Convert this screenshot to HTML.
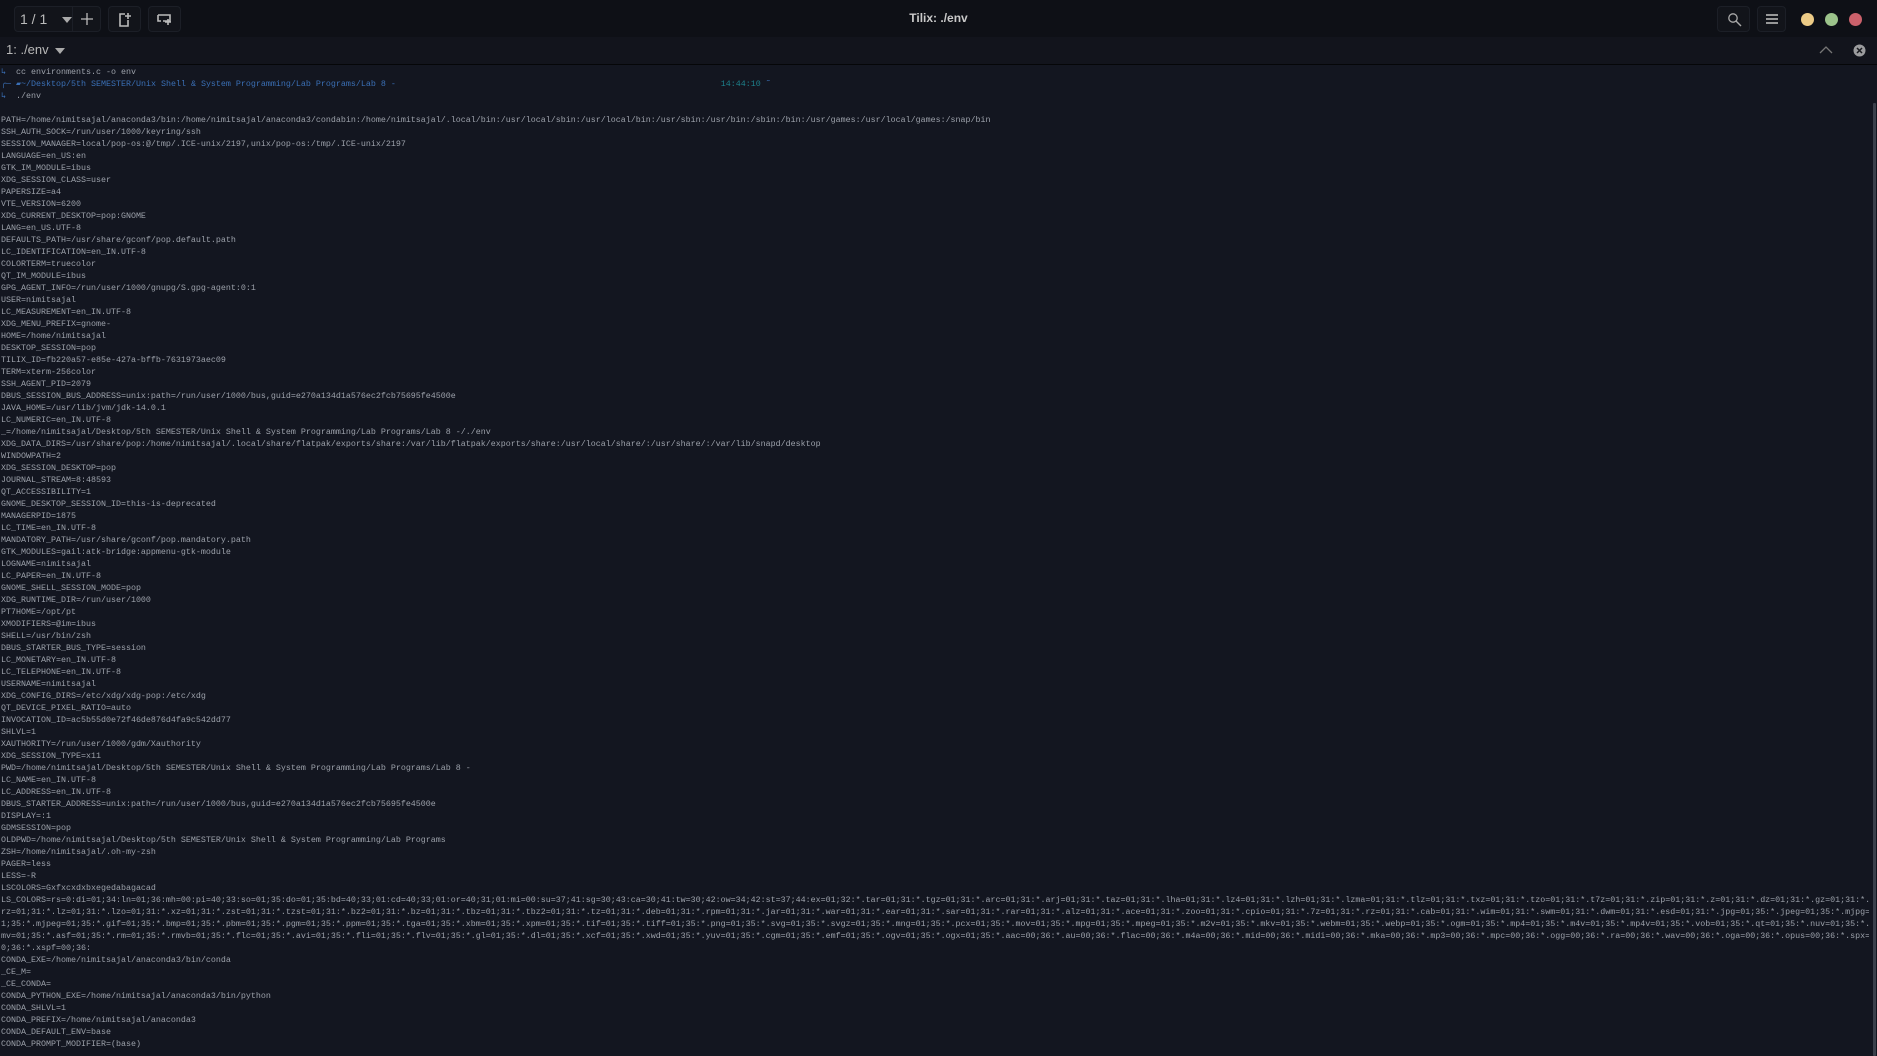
<!DOCTYPE html>
<html><head><meta charset="utf-8"><style>
html,body{margin:0;padding:0;width:1877px;height:1056px;overflow:hidden;background:#131620;}
#title{position:absolute;left:0;top:0;width:1877px;height:37px;background:#0e1016;}
#tabbar{position:absolute;left:0;top:37px;width:1877px;height:27px;background:#12141c;border-bottom:1px solid #050608;}
.btn{position:absolute;top:6px;height:26px;background:#12141a;border:1px solid #1c1f27;border-radius:4px;box-sizing:border-box;}
#ttl{position:absolute;left:0;width:1877px;top:11px;text-align:center;font:bold 12px "Liberation Sans",sans-serif;color:#c9c9c9;}
.dot{position:absolute;top:13px;width:13px;height:13px;border-radius:50%;}
#term{position:absolute;left:1px;top:66px;width:1868px;height:990px;font-family:"Liberation Mono",monospace;font-size:8.33px;line-height:12px;color:#9ca1aa;overflow:hidden;}
#term div{height:12px;overflow:hidden;white-space:pre;}
.b{color:#3a6fb5}.t{color:#1d808b}
#sb{position:absolute;left:1873px;top:103px;width:3px;height:953px;background:#3b404b;border-radius:1px;}
</style></head><body>
<div id="title">
 <div class="btn" style="left:14px;width:87px"><span style="position:absolute;left:5px;top:4px;font:14px 'Liberation Sans',sans-serif;color:#bbb">1 / 1</span><svg style="position:absolute;left:46px;top:9px" width="12" height="8"><path d="M1 1h10l-5 6z" fill="#aaa"/></svg><div style="position:absolute;left:57px;top:0;width:1px;height:24px;background:#1c1f27"></div><svg style="position:absolute;left:65px;top:5px" width="14" height="14"><path d="M7 1v12M1 7h12" stroke="#bbb" stroke-width="1.3"/></svg></div>
 <div class="btn" style="left:108px;width:33px"><svg style="position:absolute;left:9px;top:5px" width="14" height="16"><path d="M7 2H2v12h8V8" stroke="#bbb" stroke-width="1.6" fill="none"/><path d="M10 1v6M7 4h6" stroke="#bbb" stroke-width="1.6"/></svg></div>
 <div class="btn" style="left:148px;width:33px"><svg style="position:absolute;left:8px;top:6px" width="16" height="14"><path d="M1 2h12v6H6" stroke="#bbb" stroke-width="1.6" fill="none"/><path d="M1 2v6h3" stroke="#bbb" stroke-width="1.6" fill="none"/><path d="M11 6v6M8 9h6" stroke="#bbb" stroke-width="1.6"/></svg></div>
 <div id="ttl">Tilix: ./env</div>
 <div class="btn" style="left:1717px;width:33px"><svg style="position:absolute;left:9px;top:5px" width="16" height="16"><circle cx="6" cy="6" r="4.2" stroke="#aaa" stroke-width="1.3" fill="none"/><path d="M9 9l5 5" stroke="#aaa" stroke-width="1.4"/></svg></div>
 <div class="btn" style="left:1757px;width:29px"><svg style="position:absolute;left:8px;top:7px" width="12" height="11"><path d="M0 1h12M0 5h12M0 9h12" stroke="#aaa" stroke-width="1.7"/></svg></div>
 <div class="dot" style="left:1801px;background:#eccb86"></div>
 <div class="dot" style="left:1825px;background:#9cc38b"></div>
 <div class="dot" style="left:1849px;background:#cb616b"></div>
</div>
<div id="tabbar">
 <span style="position:absolute;left:6px;top:5px;font:13px 'Liberation Sans',sans-serif;color:#b8b8b8">1: ./env</span>
 <svg style="position:absolute;left:55px;top:11px" width="11" height="7"><path d="M0 0h10l-5 6z" fill="#aaa"/></svg>
 <svg style="position:absolute;left:1819px;top:8px" width="14" height="9"><path d="M1 8l6-6 6 6" stroke="#777" stroke-width="1.3" fill="none"/></svg>
 <svg style="position:absolute;left:1853px;top:7px" width="13" height="13"><circle cx="6.5" cy="6.5" r="6" fill="#9b9c9e"/><path d="M4 4l5 5M9 4l-5 5" stroke="#1a1b20" stroke-width="1.5"/></svg>
</div>
<div id="term"><div><span class="b">↳</span>  cc environments.c -o env</div><div><span class="b">╭─ ▰~/Desktop/5th SEMESTER/Unix Shell &amp; System Programming/Lab Programs/Lab 8 -</span>                                                                 <span class="t">14:44:10</span> <span class="b">˜</span></div><div><span class="b">↳</span>  ./env</div><div> </div><div>PATH=/home/nimitsajal/anaconda3/bin:/home/nimitsajal/anaconda3/condabin:/home/nimitsajal/.local/bin:/usr/local/sbin:/usr/local/bin:/usr/sbin:/usr/bin:/sbin:/bin:/usr/games:/usr/local/games:/snap/bin</div><div>SSH_AUTH_SOCK=/run/user/1000/keyring/ssh</div><div>SESSION_MANAGER=local/pop-os:@/tmp/.ICE-unix/2197,unix/pop-os:/tmp/.ICE-unix/2197</div><div>LANGUAGE=en_US:en</div><div>GTK_IM_MODULE=ibus</div><div>XDG_SESSION_CLASS=user</div><div>PAPERSIZE=a4</div><div>VTE_VERSION=6200</div><div>XDG_CURRENT_DESKTOP=pop:GNOME</div><div>LANG=en_US.UTF-8</div><div>DEFAULTS_PATH=/usr/share/gconf/pop.default.path</div><div>LC_IDENTIFICATION=en_IN.UTF-8</div><div>COLORTERM=truecolor</div><div>QT_IM_MODULE=ibus</div><div>GPG_AGENT_INFO=/run/user/1000/gnupg/S.gpg-agent:0:1</div><div>USER=nimitsajal</div><div>LC_MEASUREMENT=en_IN.UTF-8</div><div>XDG_MENU_PREFIX=gnome-</div><div>HOME=/home/nimitsajal</div><div>DESKTOP_SESSION=pop</div><div>TILIX_ID=fb220a57-e85e-427a-bffb-7631973aec09</div><div>TERM=xterm-256color</div><div>SSH_AGENT_PID=2079</div><div>DBUS_SESSION_BUS_ADDRESS=unix:path=/run/user/1000/bus,guid=e270a134d1a576ec2fcb75695fe4500e</div><div>JAVA_HOME=/usr/lib/jvm/jdk-14.0.1</div><div>LC_NUMERIC=en_IN.UTF-8</div><div>_=/home/nimitsajal/Desktop/5th SEMESTER/Unix Shell &amp; System Programming/Lab Programs/Lab 8 -/./env</div><div>XDG_DATA_DIRS=/usr/share/pop:/home/nimitsajal/.local/share/flatpak/exports/share:/var/lib/flatpak/exports/share:/usr/local/share/:/usr/share/:/var/lib/snapd/desktop</div><div>WINDOWPATH=2</div><div>XDG_SESSION_DESKTOP=pop</div><div>JOURNAL_STREAM=8:48593</div><div>QT_ACCESSIBILITY=1</div><div>GNOME_DESKTOP_SESSION_ID=this-is-deprecated</div><div>MANAGERPID=1875</div><div>LC_TIME=en_IN.UTF-8</div><div>MANDATORY_PATH=/usr/share/gconf/pop.mandatory.path</div><div>GTK_MODULES=gail:atk-bridge:appmenu-gtk-module</div><div>LOGNAME=nimitsajal</div><div>LC_PAPER=en_IN.UTF-8</div><div>GNOME_SHELL_SESSION_MODE=pop</div><div>XDG_RUNTIME_DIR=/run/user/1000</div><div>PT7HOME=/opt/pt</div><div>XMODIFIERS=@im=ibus</div><div>SHELL=/usr/bin/zsh</div><div>DBUS_STARTER_BUS_TYPE=session</div><div>LC_MONETARY=en_IN.UTF-8</div><div>LC_TELEPHONE=en_IN.UTF-8</div><div>USERNAME=nimitsajal</div><div>XDG_CONFIG_DIRS=/etc/xdg/xdg-pop:/etc/xdg</div><div>QT_DEVICE_PIXEL_RATIO=auto</div><div>INVOCATION_ID=ac5b55d0e72f46de876d4fa9c542dd77</div><div>SHLVL=1</div><div>XAUTHORITY=/run/user/1000/gdm/Xauthority</div><div>XDG_SESSION_TYPE=x11</div><div>PWD=/home/nimitsajal/Desktop/5th SEMESTER/Unix Shell &amp; System Programming/Lab Programs/Lab 8 -</div><div>LC_NAME=en_IN.UTF-8</div><div>LC_ADDRESS=en_IN.UTF-8</div><div>DBUS_STARTER_ADDRESS=unix:path=/run/user/1000/bus,guid=e270a134d1a576ec2fcb75695fe4500e</div><div>DISPLAY=:1</div><div>GDMSESSION=pop</div><div>OLDPWD=/home/nimitsajal/Desktop/5th SEMESTER/Unix Shell &amp; System Programming/Lab Programs</div><div>ZSH=/home/nimitsajal/.oh-my-zsh</div><div>PAGER=less</div><div>LESS=-R</div><div>LSCOLORS=Gxfxcxdxbxegedabagacad</div><div>LS_COLORS=rs=0:di=01;34:ln=01;36:mh=00:pi=40;33:so=01;35:do=01;35:bd=40;33;01:cd=40;33;01:or=40;31;01:mi=00:su=37;41:sg=30;43:ca=30;41:tw=30;42:ow=34;42:st=37;44:ex=01;32:*.tar=01;31:*.tgz=01;31:*.arc=01;31:*.arj=01;31:*.taz=01;31:*.lha=01;31:*.lz4=01;31:*.lzh=01;31:*.lzma=01;31:*.tlz=01;31:*.txz=01;31:*.tzo=01;31:*.t7z=01;31:*.zip=01;31:*.z=01;31:*.dz=01;31:*.gz=01;31:*.lrz=01;31:*.</div><div>rz=01;31:*.lz=01;31:*.lzo=01;31:*.xz=01;31:*.zst=01;31:*.tzst=01;31:*.bz2=01;31:*.bz=01;31:*.tbz=01;31:*.tbz2=01;31:*.tz=01;31:*.deb=01;31:*.rpm=01;31:*.jar=01;31:*.war=01;31:*.ear=01;31:*.sar=01;31:*.rar=01;31:*.alz=01;31:*.ace=01;31:*.zoo=01;31:*.cpio=01;31:*.7z=01;31:*.rz=01;31:*.cab=01;31:*.wim=01;31:*.swm=01;31:*.dwm=01;31:*.esd=01;31:*.jpg=01;35:*.jpeg=01;35:*.mjpg=0</div><div>1;35:*.mjpeg=01;35:*.gif=01;35:*.bmp=01;35:*.pbm=01;35:*.pgm=01;35:*.ppm=01;35:*.tga=01;35:*.xbm=01;35:*.xpm=01;35:*.tif=01;35:*.tiff=01;35:*.png=01;35:*.svg=01;35:*.svgz=01;35:*.mng=01;35:*.pcx=01;35:*.mov=01;35:*.mpg=01;35:*.mpeg=01;35:*.m2v=01;35:*.mkv=01;35:*.webm=01;35:*.webp=01;35:*.ogm=01;35:*.mp4=01;35:*.m4v=01;35:*.mp4v=01;35:*.vob=01;35:*.qt=01;35:*.nuv=01;35:*.w</div><div>mv=01;35:*.asf=01;35:*.rm=01;35:*.rmvb=01;35:*.flc=01;35:*.avi=01;35:*.fli=01;35:*.flv=01;35:*.gl=01;35:*.dl=01;35:*.xcf=01;35:*.xwd=01;35:*.yuv=01;35:*.cgm=01;35:*.emf=01;35:*.ogv=01;35:*.ogx=01;35:*.aac=00;36:*.au=00;36:*.flac=00;36:*.m4a=00;36:*.mid=00;36:*.midi=00;36:*.mka=00;36:*.mp3=00;36:*.mpc=00;36:*.ogg=00;36:*.ra=00;36:*.wav=00;36:*.oga=00;36:*.opus=00;36:*.spx=0</div><div>0;36:*.xspf=00;36:</div><div>CONDA_EXE=/home/nimitsajal/anaconda3/bin/conda</div><div>_CE_M=</div><div>_CE_CONDA=</div><div>CONDA_PYTHON_EXE=/home/nimitsajal/anaconda3/bin/python</div><div>CONDA_SHLVL=1</div><div>CONDA_PREFIX=/home/nimitsajal/anaconda3</div><div>CONDA_DEFAULT_ENV=base</div><div>CONDA_PROMPT_MODIFIER=(base)</div></div>
<div id="sb"></div>
</body></html>
